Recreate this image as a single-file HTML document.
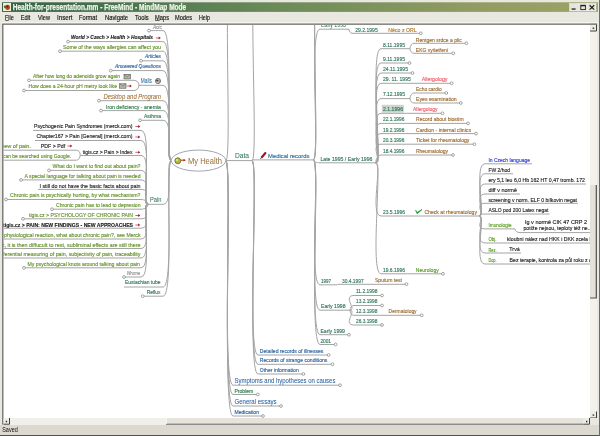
<!DOCTYPE html><html><head><meta charset="utf-8"><style>
html,body{margin:0;padding:0;width:600px;height:436px;overflow:hidden;background:#ece9d8;}
svg{display:block;will-change:transform;font-family:"Liberation Sans",sans-serif;}
</style></head><body>
<svg width="600" height="436" viewBox="0 0 600 436">
<defs><linearGradient id="tb" x1="0" x2="1" y1="0" y2="0"><stop offset="0" stop-color="#335f42"/><stop offset="0.2" stop-color="#4b7550"/><stop offset="0.45" stop-color="#6a8a58"/><stop offset="0.8" stop-color="#929c62"/><stop offset="1" stop-color="#9aa466"/></linearGradient><clipPath id="cv"><rect x="3.5" y="25" width="586.5" height="393"/></clipPath></defs>
<rect x="0" y="0" width="600" height="436" fill="#e9e8e0"/>
<rect x="2" y="2.3" width="596" height="9.6" fill="url(#tb)"/>
<rect x="3" y="3" width="8" height="8" fill="#f2ecd4"/><ellipse cx="7.6" cy="7.3" rx="2.4" ry="2.6" fill="#b04a20"/><circle cx="7.4" cy="6.6" r="1" fill="#701808"/><ellipse cx="5" cy="6.8" rx="1.1" ry="1.5" fill="#6a5a30"/>
<text x="12.7" y="9.8" font-size="8.4" font-weight="bold" fill="#eef6ea" stroke="#eef6ea" stroke-width="0.25" textLength="173.5" lengthAdjust="spacingAndGlyphs">Health-for-presentation.mm - FreeMind - MindMap Mode</text>
<rect x="569.7" y="3.5" width="8.5" height="7.5" fill="#e6e6dc" stroke="#fafafa" stroke-width="0.5"/>
<rect x="578.7" y="3.5" width="8.5" height="7.5" fill="#e6e6dc" stroke="#fafafa" stroke-width="0.5"/>
<rect x="587.5" y="3.5" width="8.5" height="7.5" fill="#e6e6dc" stroke="#fafafa" stroke-width="0.5"/>
<rect x="571.6" y="8.4" width="4" height="1.3" fill="#202020"/>
<rect x="580.8" y="5.3" width="4.6" height="4.3" fill="none" stroke="#202020" stroke-width="0.9"/><rect x="580.8" y="5" width="4.6" height="1.3" fill="#202020"/>
<path d="M589.6,5.2L594.2,9.6M594.2,5.2L589.6,9.6" stroke="#202020" stroke-width="1.2"/>
<text x="5" y="19.7" font-size="7.4" fill="#101010" stroke="#101010" stroke-width="0.15" textLength="8.8" lengthAdjust="spacingAndGlyphs">File</text>
<text x="20.7" y="19.7" font-size="7.4" fill="#101010" stroke="#101010" stroke-width="0.15" textLength="9.6" lengthAdjust="spacingAndGlyphs">Edit</text>
<text x="38" y="19.7" font-size="7.4" fill="#101010" stroke="#101010" stroke-width="0.15" textLength="12.0" lengthAdjust="spacingAndGlyphs">View</text>
<text x="57" y="19.7" font-size="7.4" fill="#101010" stroke="#101010" stroke-width="0.15" textLength="15.5" lengthAdjust="spacingAndGlyphs">Insert</text>
<text x="79" y="19.7" font-size="7.4" fill="#101010" stroke="#101010" stroke-width="0.15" textLength="18.0" lengthAdjust="spacingAndGlyphs">Format</text>
<text x="105" y="19.7" font-size="7.4" fill="#101010" stroke="#101010" stroke-width="0.15" textLength="23.0" lengthAdjust="spacingAndGlyphs">Navigate</text>
<text x="135" y="19.7" font-size="7.4" fill="#101010" stroke="#101010" stroke-width="0.15" textLength="13.6" lengthAdjust="spacingAndGlyphs">Tools</text>
<text x="155" y="19.7" font-size="7.4" fill="#101010" stroke="#101010" stroke-width="0.15" textLength="14.0" lengthAdjust="spacingAndGlyphs">Maps</text>
<text x="175" y="19.7" font-size="7.4" fill="#101010" stroke="#101010" stroke-width="0.15" textLength="17.0" lengthAdjust="spacingAndGlyphs">Modes</text>
<text x="199" y="19.7" font-size="7.4" fill="#101010" stroke="#101010" stroke-width="0.15" textLength="11.0" lengthAdjust="spacingAndGlyphs">Help</text>
<rect x="5.2" y="20.3" width="3.5" height="0.6" fill="#101010"/><rect x="155.2" y="20.3" width="4.5" height="0.6" fill="#101010"/>
<rect x="2" y="22" width="596" height="0.8" fill="#f8f8f4"/>
<rect x="2" y="23" width="588" height="395" fill="#ffffff"/>
<path d="M2.8,424.5V24.1H597" stroke="#646464" stroke-width="1.25" fill="none"/>
<g clip-path="url(#cv)">
<rect x="381.8" y="104.8" width="22" height="7.8" fill="#cbd4cd"/>
<path d="M149,30.6H163 M171.5,160.6C164.50,160.6 174.70,30.6 163,30.6 M68,41.6H163 M171.5,160.6C164.50,160.6 174.70,41.6 163,41.6 M60,51.2H163 M171.5,160.6C164.50,160.6 174.70,51.2 163,51.2 M141,60.8H163 M171.5,160.6C164.50,160.6 174.70,60.8 163,60.8 M110.7,70.6H163 M171.5,160.6C164.50,160.6 174.70,70.6 163,70.6 M139,85.3H163 M171.5,160.6C164.50,160.6 174.70,85.3 163,85.3 M99,100.7H163 M171.5,160.6C164.50,160.6 174.70,100.7 163,100.7 M101,110.6H163 M171.5,160.6C164.50,160.6 174.70,110.6 163,110.6 M140,120.3H163 M171.5,160.6C164.50,160.6 174.70,120.3 163,120.3 M148,204.3H163 M171.5,160.6C164.50,160.6 174.70,204.3 163,204.3 M124,287.0H163 M171.5,160.6C164.50,160.6 174.70,287.0 163,287.0 M142.7,296.2H163 M171.5,160.6C164.50,160.6 174.70,296.2 163,296.2 M29,80.3H134 M139,85C139,82.41 136.75,80.3 134,80.3 M24,90.5H134 M139,85C139,88.03 136.75,90.5 134,90.5 M33,130.4H141 M148,204.3C141.00,204.3 152.70,130.4 141,130.4 M35,140.5H141 M148,204.3C141.00,204.3 152.70,140.5 141,140.5 M80.2,155.5H141 M148,204.3C141.00,204.3 152.70,155.5 141,155.5 M49,170.4H141 M148,204.3C141.00,204.3 152.70,170.4 141,170.4 M21,179.9H141 M148,204.3C141.00,204.3 152.70,179.9 141,179.9 M38,189.4H141 M148,204.3C141.00,204.3 152.70,189.4 141,189.4 M6,199.5H141 M148,204.3C148,201.66 144.85,199.5 141,199.5 M52,209.2H141 M148,204.3C148,207.00 144.85,209.2 141,209.2 M23,218.8H141 M148,204.3C141.00,204.3 152.70,218.8 141,218.8 M3,228.2H141 M148,204.3C141.00,204.3 152.70,228.2 141,228.2 M3,239H141 M148,204.3C141.00,204.3 152.70,239 141,239 M3,248.5H141 M148,204.3C141.00,204.3 152.70,248.5 141,248.5 M3,258H141 M148,204.3C141.00,204.3 152.70,258 141,258 M24,267.8H141 M148,204.3C141.00,204.3 152.70,267.8 141,267.8 M124,277H141 M148,204.3C141.00,204.3 152.70,277 141,277 M3,150.2H76.5 M80.2,154.7C80.2,152.22 78.53,150.2 76.5,150.2 M3,160.2H76.5 M80.2,154.7C80.2,157.72 78.53,160.2 76.5,160.2 M225.7,160.6C232.70,160.6 221.30,-40 233,-40 M225.7,160.6H252 M225.7,160.6C232.70,160.6 221.30,385.2 233,385.2 M233,385.2H340 M225.7,160.6C232.70,160.6 221.30,394.5 233,394.5 M233,394.5H257.8 M225.7,160.6C232.70,160.6 221.30,406 233,406 M233,406H281 M225.7,160.6C232.70,160.6 221.30,416 233,416 M233,416H263 M252,160.6C259.00,160.6 246.30,-40 258,-40 M252,159.9H313.4 M252,160.6C259.00,160.6 246.30,355 258,355 M258,355H328.6 M252,160.6C259.00,160.6 246.30,364.3 258,364.3 M258,364.3H332.5 M252,160.6C259.00,160.6 246.30,374 258,374 M258,374H303.4 M313.4,159.9C320.40,159.9 308.30,-40 320,-40 M313.4,159.9C320.40,159.9 308.30,-20 320,-20 M313.4,159.9C320.40,159.9 308.30,29.2 320,29.2 M320,29.2H349 M349,29.2C349,31.45 350.35,33.3 352,33.3 M352,33.3H420.8 M313.4,159.9C313.4,161.50 316.37,162.8 320,162.8 M320,162.8H375.8 M313.4,159.9C320.40,159.9 308.30,284.8 320,284.8 M320,284.8H337 M337,284.8C337,284.53 338.35,284.3 340,284.3 M340,284.3H406.5 M313.4,159.9C320.40,159.9 308.30,310.2 320,310.2 M320,310.2H350 M350,310.2C357.00,310.2 342.30,295.5 354,295.5 M354,295.5H382 M350,310.2C350,307.62 351.80,305.5 354,305.5 M354,305.5H382 M350,310.2C350,313.00 351.80,315.3 354,315.3 M354,315.3H421.7 M350,310.2C357.00,310.2 342.30,325 354,325 M354,325H382 M313.4,159.9C320.40,159.9 308.30,334.7 320,334.7 M320,334.7H349 M313.4,159.9C320.40,159.9 308.30,344.5 320,344.5 M320,344.5H335.6 M375.8,162.8C382.80,162.8 369.30,48.7 381,48.7 M381,48.7H410 M410,48.7C410,45.73 411.80,43.3 414,43.3 M414,43.3H466.3 M410,48.7C410,51.23 411.80,53.3 414,53.3 M414,53.3H453.3 M375.8,162.8C382.80,162.8 369.30,63 381,63 M381,63H409.5 M375.8,162.8C382.80,162.8 369.30,73 381,73 M381,73H412.5 M375.8,162.8C382.80,162.8 369.30,83.3 381,83.3 M381,83.3H451.7 M375.8,162.8C382.80,162.8 369.30,98.6 381,98.6 M381,98.6H410 M410,98.6C410,95.52 411.80,93 414,93 M414,93H446.3 M410,98.6C410,101.02 411.80,103 414,103 M414,103H460.8 M375.8,162.8C382.80,162.8 369.30,113.3 381,113.3 M381,113.3H442.5 M375.8,162.8C382.80,162.8 369.30,123.4 381,123.4 M381,123.4H468 M375.8,162.8C382.80,162.8 369.30,133.6 381,133.6 M381,133.6H476 M375.8,162.8C382.80,162.8 369.30,144.2 381,144.2 M381,144.2H474.4 M375.8,162.8C375.8,158.51 378.14,155.0 381,155.0 M381,155.0H453 M375.8,162.8C382.80,162.8 369.30,216.0 381,216.0 M381,216.0H479 M375.8,162.8C382.80,162.8 369.30,273.8 381,273.8 M381,273.8H443 M479,216.0C486.00,216.0 473.30,163.8 485,163.8 M485,163.8H532 M479,216.0C486.00,216.0 473.30,173.8 485,173.8 M485,173.8H513 M479,216.0C486.00,216.0 473.30,184.0 485,184.0 M485,184.0H586 M479,216.0C486.00,216.0 473.30,194.0 485,194.0 M485,194.0H520 M479,216.0C486.00,216.0 473.30,203.3 485,203.3 M485,203.3H578 M479,216.0C479,214.90 481.70,214.0 485,214.0 M485,214.0H549.5 M479,216.0C486.00,216.0 473.30,228.9 485,228.9 M485,228.9H515 M515,228.9C515,230.94 517.25,232.6 520,232.6 M520,232.6H592 M479,216.0C486.00,216.0 473.30,243.0 485,243.0 M485,243.0H592 M479,216.0C486.00,216.0 473.30,253.0 485,253.0 M485,253.0H521 M479,216.0C486.00,216.0 473.30,264.0 485,264.0 M485,264.0H592" stroke="#a4a4a4" stroke-width="1" fill="none"/>
<ellipse cx="198.5" cy="160.6" rx="27.2" ry="10.5" fill="#ffffff" stroke="#9a9aa8" stroke-width="0.9"/>
<circle cx="149" cy="30.6" r="1.4" fill="#ffffff" stroke="#808080" stroke-width="0.7"/>
<circle cx="68" cy="41.6" r="1.4" fill="#ffffff" stroke="#808080" stroke-width="0.7"/>
<circle cx="60" cy="51.2" r="1.4" fill="#ffffff" stroke="#808080" stroke-width="0.7"/>
<circle cx="141" cy="60.8" r="1.4" fill="#ffffff" stroke="#808080" stroke-width="0.7"/>
<circle cx="110.7" cy="70.6" r="1.4" fill="#ffffff" stroke="#808080" stroke-width="0.7"/>
<circle cx="99" cy="100.7" r="1.4" fill="#ffffff" stroke="#808080" stroke-width="0.7"/>
<circle cx="101" cy="110.6" r="1.4" fill="#ffffff" stroke="#808080" stroke-width="0.7"/>
<circle cx="140" cy="120.3" r="1.4" fill="#ffffff" stroke="#808080" stroke-width="0.7"/>
<circle cx="142.7" cy="296.2" r="1.4" fill="#ffffff" stroke="#808080" stroke-width="0.7"/>
<circle cx="29" cy="80.3" r="1.4" fill="#ffffff" stroke="#808080" stroke-width="0.7"/>
<circle cx="24" cy="90.5" r="1.4" fill="#ffffff" stroke="#808080" stroke-width="0.7"/>
<circle cx="49" cy="170.4" r="1.4" fill="#ffffff" stroke="#808080" stroke-width="0.7"/>
<circle cx="21" cy="179.9" r="1.4" fill="#ffffff" stroke="#808080" stroke-width="0.7"/>
<circle cx="6" cy="199.5" r="1.4" fill="#ffffff" stroke="#808080" stroke-width="0.7"/>
<circle cx="52" cy="209.2" r="1.4" fill="#ffffff" stroke="#808080" stroke-width="0.7"/>
<circle cx="23" cy="218.8" r="1.4" fill="#ffffff" stroke="#808080" stroke-width="0.7"/>
<circle cx="24" cy="267.8" r="1.4" fill="#ffffff" stroke="#808080" stroke-width="0.7"/>
<circle cx="124" cy="277" r="1.4" fill="#ffffff" stroke="#808080" stroke-width="0.7"/>
<circle cx="340" cy="385.2" r="1.4" fill="#ffffff" stroke="#808080" stroke-width="0.7"/>
<circle cx="257.8" cy="394.5" r="1.4" fill="#ffffff" stroke="#808080" stroke-width="0.7"/>
<circle cx="281" cy="406" r="1.4" fill="#ffffff" stroke="#808080" stroke-width="0.7"/>
<circle cx="263" cy="416" r="1.4" fill="#ffffff" stroke="#808080" stroke-width="0.7"/>
<circle cx="328.6" cy="355" r="1.4" fill="#ffffff" stroke="#808080" stroke-width="0.7"/>
<circle cx="332.5" cy="364.3" r="1.4" fill="#ffffff" stroke="#808080" stroke-width="0.7"/>
<circle cx="303.4" cy="374" r="1.4" fill="#ffffff" stroke="#808080" stroke-width="0.7"/>
<circle cx="420.8" cy="33.3" r="1.4" fill="#ffffff" stroke="#808080" stroke-width="0.7"/>
<circle cx="406.5" cy="284.2" r="1.4" fill="#ffffff" stroke="#808080" stroke-width="0.7"/>
<circle cx="382" cy="295.5" r="1.4" fill="#ffffff" stroke="#808080" stroke-width="0.7"/>
<circle cx="382" cy="305.5" r="1.4" fill="#ffffff" stroke="#808080" stroke-width="0.7"/>
<circle cx="421.7" cy="315.3" r="1.4" fill="#ffffff" stroke="#808080" stroke-width="0.7"/>
<circle cx="382" cy="325" r="1.4" fill="#ffffff" stroke="#808080" stroke-width="0.7"/>
<circle cx="349" cy="334.7" r="1.4" fill="#ffffff" stroke="#808080" stroke-width="0.7"/>
<circle cx="335.6" cy="344.5" r="1.4" fill="#ffffff" stroke="#808080" stroke-width="0.7"/>
<circle cx="466.3" cy="43.3" r="1.4" fill="#ffffff" stroke="#808080" stroke-width="0.7"/>
<circle cx="453.3" cy="53.3" r="1.4" fill="#ffffff" stroke="#808080" stroke-width="0.7"/>
<circle cx="409.5" cy="63" r="1.4" fill="#ffffff" stroke="#808080" stroke-width="0.7"/>
<circle cx="412.5" cy="73" r="1.4" fill="#ffffff" stroke="#808080" stroke-width="0.7"/>
<circle cx="451.7" cy="83.3" r="1.4" fill="#ffffff" stroke="#808080" stroke-width="0.7"/>
<circle cx="446.3" cy="93" r="1.4" fill="#ffffff" stroke="#808080" stroke-width="0.7"/>
<circle cx="460.8" cy="103" r="1.4" fill="#ffffff" stroke="#808080" stroke-width="0.7"/>
<circle cx="442.5" cy="113.3" r="1.4" fill="#ffffff" stroke="#808080" stroke-width="0.7"/>
<circle cx="468" cy="123.4" r="1.4" fill="#ffffff" stroke="#808080" stroke-width="0.7"/>
<circle cx="476" cy="133.6" r="1.4" fill="#ffffff" stroke="#808080" stroke-width="0.7"/>
<circle cx="474.4" cy="144.2" r="1.4" fill="#ffffff" stroke="#808080" stroke-width="0.7"/>
<circle cx="453" cy="155.0" r="1.4" fill="#ffffff" stroke="#808080" stroke-width="0.7"/>
<circle cx="443" cy="273.8" r="1.4" fill="#ffffff" stroke="#808080" stroke-width="0.7"/>
<path d="M155.9,38H159.3" stroke="#c83848" stroke-width="0.8"/><path d="M158.7,36.6L160.8,38L158.7,39.4Z" fill="#9a1a2a"/>
<path d="M126.9,86H130.3" stroke="#c83848" stroke-width="0.8"/><path d="M129.7,84.6L131.8,86L129.7,87.4Z" fill="#9a1a2a"/>
<path d="M135.4,126.5H138.8" stroke="#c83848" stroke-width="0.8"/><path d="M138.2,125.1L140.3,126.5L138.2,127.9Z" fill="#9a1a2a"/>
<path d="M135.4,137H138.8" stroke="#c83848" stroke-width="0.8"/><path d="M138.2,135.6L140.3,137L138.2,138.4Z" fill="#9a1a2a"/>
<path d="M135.4,152.3H138.8" stroke="#c83848" stroke-width="0.8"/><path d="M138.2,150.9L140.3,152.3L138.2,153.70000000000002Z" fill="#9a1a2a"/>
<path d="M135.4,215.5H138.8" stroke="#c83848" stroke-width="0.8"/><path d="M138.2,214.1L140.3,215.5L138.2,216.9Z" fill="#9a1a2a"/>
<path d="M135.4,225H138.8" stroke="#c83848" stroke-width="0.8"/><path d="M138.2,223.6L140.3,225L138.2,226.4Z" fill="#9a1a2a"/>
<path d="M67.4,146H70.8" stroke="#c83848" stroke-width="0.8"/><path d="M70.2,144.6L72.3,146L70.2,147.4Z" fill="#9a1a2a"/>
<circle cx="177.8" cy="160.8" r="3" fill="#b4b83a" stroke="#5a5a20" stroke-width="0.7"/><circle cx="177" cy="159.9" r="1" fill="#eeeea0"/>
<path d="M181,160.2H184.5" stroke="#b02818" stroke-width="1"/><path d="M183.5,158.8L185.8,160.2L183.5,161.6Z" fill="#b02818"/>
<text x="188" y="163.6" font-size="8.2" fill="#967038" textLength="34" lengthAdjust="spacingAndGlyphs">My Health</text>
<text x="153" y="29.0" font-size="5.2" fill="#8a8a8a" stroke="#8a8a8a" stroke-width="0.15" font-style="italic" textLength="8.7" lengthAdjust="spacingAndGlyphs">Acic</text>
<text x="71" y="38.8" font-size="6.2" fill="#1c1c1c" stroke="#1c1c1c" stroke-width="0.15" font-weight="bold" font-style="italic" textLength="82.0" lengthAdjust="spacingAndGlyphs">World &gt; Czech &gt; Health &gt; Hospitals</text>
<text x="63" y="48.6" font-size="6.2" fill="#63922a" stroke="#63922a" stroke-width="0.15" textLength="98.0" lengthAdjust="spacingAndGlyphs">Some of the ways allergies can affect you</text>
<text x="145" y="58.3" font-size="6.2" fill="#2a62a0" stroke="#2a62a0" stroke-width="0.15" font-style="italic" textLength="16.0" lengthAdjust="spacingAndGlyphs">Articles</text>
<text x="115" y="67.6" font-size="6.2" fill="#2a62a0" stroke="#2a62a0" stroke-width="0.15" font-style="italic" textLength="46.0" lengthAdjust="spacingAndGlyphs">Answered Questions</text>
<text x="140.8" y="83.2" font-size="6.8" fill="#2a6a9a" stroke="#2a6a9a" stroke-width="0.05" textLength="11.2" lengthAdjust="spacingAndGlyphs">Mails</text>
<text x="103.5" y="98.8" font-size="7.4" fill="#9a6a30" stroke="#9a6a30" stroke-width="0.05" font-style="italic" textLength="57.5" lengthAdjust="spacingAndGlyphs">Desktop and Program</text>
<text x="106" y="108.6" font-size="6.2" fill="#2c7a48" stroke="#2c7a48" stroke-width="0.15" textLength="55.0" lengthAdjust="spacingAndGlyphs">Iron deficiency - anemia</text>
<text x="144" y="118" font-size="6.2" fill="#2c7a48" stroke="#2c7a48" stroke-width="0.15" textLength="17.0" lengthAdjust="spacingAndGlyphs">Asthma</text>
<text x="150" y="202.4" font-size="6.6" fill="#2f7558" stroke="#2f7558" stroke-width="0.05" textLength="11.5" lengthAdjust="spacingAndGlyphs">Pain</text>
<text x="125" y="284.3" font-size="6.2" fill="#2f7558" stroke="#2f7558" stroke-width="0.15" textLength="35.5" lengthAdjust="spacingAndGlyphs">Eustachian tube</text>
<text x="146.7" y="293.8" font-size="6.2" fill="#2f7558" stroke="#2f7558" stroke-width="0.15" textLength="13.8" lengthAdjust="spacingAndGlyphs">Reflux</text>
<text x="33" y="78.3" font-size="6.2" fill="#63922a" stroke="#63922a" stroke-width="0.15" textLength="87.0" lengthAdjust="spacingAndGlyphs">After how long do adenoids grow again</text>
<text x="28.5" y="88.4" font-size="6.2" fill="#63922a" stroke="#63922a" stroke-width="0.15" textLength="88.5" lengthAdjust="spacingAndGlyphs">How does a 24-hour pH metry look like</text>
<text x="34" y="127.9" font-size="6.2" fill="#1c1c1c" stroke="#1c1c1c" stroke-width="0.15" textLength="98.5" lengthAdjust="spacingAndGlyphs">Psychogenic Pain Syndromes (merck.com)</text>
<text x="36.5" y="137.8" font-size="6.2" fill="#1c1c1c" stroke="#1c1c1c" stroke-width="0.15" textLength="96.0" lengthAdjust="spacingAndGlyphs">Chapter167  &gt; Pain [General] (merck.com)</text>
<text x="82.7" y="153.8" font-size="6.2" fill="#1c1c1c" stroke="#1c1c1c" stroke-width="0.15" textLength="49.8" lengthAdjust="spacingAndGlyphs">tigis.cz &gt; Pain &gt; Index</text>
<text x="52.5" y="168" font-size="6.2" fill="#63922a" stroke="#63922a" stroke-width="0.15" textLength="88.0" lengthAdjust="spacingAndGlyphs">What do I want to find out about pain?</text>
<text x="24.5" y="177.6" font-size="6.2" fill="#63922a" stroke="#63922a" stroke-width="0.15" textLength="116.0" lengthAdjust="spacingAndGlyphs">A special language for talking about pain is needed</text>
<text x="39.5" y="187.6" font-size="6.2" fill="#1c1c1c" stroke="#1c1c1c" stroke-width="0.15" textLength="101.0" lengthAdjust="spacingAndGlyphs">I still do not have the basic facts about pain</text>
<text x="10" y="197.3" font-size="6.2" fill="#63922a" stroke="#63922a" stroke-width="0.15" textLength="130.5" lengthAdjust="spacingAndGlyphs">Chronic pain is psychically hurting, by what mechanism?</text>
<text x="56" y="207.3" font-size="6.2" fill="#63922a" stroke="#63922a" stroke-width="0.15" textLength="84.5" lengthAdjust="spacingAndGlyphs">Chronic pain has to lead to depresion</text>
<text x="29" y="217.2" font-size="6.2" fill="#63922a" stroke="#63922a" stroke-width="0.15" textLength="104.0" lengthAdjust="spacingAndGlyphs">tigis.cz &gt; PSYCHOLOGY OF CHRONIC PAIN</text>
<text x="3" y="226.7" font-size="6.0" fill="#1c1c1c" stroke="#1c1c1c" stroke-width="0.15" font-weight="bold" textLength="130.0" lengthAdjust="spacingAndGlyphs">tigis.cz &gt; PAIN: NEW FINDINGS - NEW APPROACHES</text>
<text x="4" y="237.2" font-size="6.2" fill="#63922a" stroke="#63922a" stroke-width="0.15" textLength="136.5" lengthAdjust="spacingAndGlyphs">physiological reaction, what about chronic pain?, see Merck</text>
<text x="3" y="246.7" font-size="6.2" fill="#63922a" stroke="#63922a" stroke-width="0.15" textLength="137.5" lengthAdjust="spacingAndGlyphs">t, it is then diffucult to rest, subliminal effects are still there</text>
<text x="3" y="256.2" font-size="6.2" fill="#63922a" stroke="#63922a" stroke-width="0.15" textLength="137.5" lengthAdjust="spacingAndGlyphs">ferential measuring of pain, subjectivity of pain, traceability</text>
<text x="27.5" y="266" font-size="6.2" fill="#63922a" stroke="#63922a" stroke-width="0.15" textLength="112.5" lengthAdjust="spacingAndGlyphs">My psychological knots around talking about pain</text>
<text x="126.7" y="275.3" font-size="5.0" fill="#909090" stroke="#909090" stroke-width="0.15" font-style="italic" textLength="13.3" lengthAdjust="spacingAndGlyphs">Wrome</text>
<text x="40.8" y="147.5" font-size="6.2" fill="#1c1c1c" stroke="#1c1c1c" stroke-width="0.15" textLength="24.4" lengthAdjust="spacingAndGlyphs">PDF &gt; Pdf</text>
<text x="3" y="147.5" font-size="6.2" fill="#63922a" stroke="#63922a" stroke-width="0.15" textLength="28.0" lengthAdjust="spacingAndGlyphs">iew of pain.</text>
<text x="3" y="158.0" font-size="6.2" fill="#63922a" stroke="#63922a" stroke-width="0.15" textLength="68.0" lengthAdjust="spacingAndGlyphs">can be searched using Google.</text>
<text x="235" y="157.8" font-size="7.4" fill="#2f7558" stroke="#2f7558" stroke-width="0.05" textLength="14.0" lengthAdjust="spacingAndGlyphs">Data</text>
<text x="234.5" y="383.2" font-size="7.0" fill="#2a62a0" stroke="#2a62a0" stroke-width="0.05" textLength="100.9" lengthAdjust="spacingAndGlyphs">Symptoms and hypotheses on causes</text>
<text x="234.5" y="392.8" font-size="5.4" fill="#2c7a48" stroke="#2c7a48" stroke-width="0.15" textLength="18.8" lengthAdjust="spacingAndGlyphs">Problem</text>
<text x="234.5" y="404.0" font-size="7.0" fill="#2a62a0" stroke="#2a62a0" stroke-width="0.05" textLength="42.1" lengthAdjust="spacingAndGlyphs">General essays</text>
<text x="234.5" y="414.3" font-size="5.4" fill="#2a62a0" stroke="#2a62a0" stroke-width="0.15" textLength="24.5" lengthAdjust="spacingAndGlyphs">Medication</text>
<text x="268" y="158.0" font-size="6.2" fill="#2a72a0" stroke="#2a72a0" stroke-width="0.15" textLength="41.5" lengthAdjust="spacingAndGlyphs">Medical records</text>
<text x="259.8" y="353.0" font-size="6.2" fill="#2a62a0" stroke="#2a62a0" stroke-width="0.15" textLength="63.6" lengthAdjust="spacingAndGlyphs">Detailed records of illnesses</text>
<text x="259.8" y="362.3" font-size="6.2" fill="#2a62a0" stroke="#2a62a0" stroke-width="0.15" textLength="67.6" lengthAdjust="spacingAndGlyphs">Records of strange conditions</text>
<text x="259.8" y="372.0" font-size="6.2" fill="#2a62a0" stroke="#2a62a0" stroke-width="0.15" textLength="38.9" lengthAdjust="spacingAndGlyphs">Other information</text>
<text x="321" y="27.3" font-size="7.0" fill="#2f7558" stroke="#2f7558" stroke-width="0.05" textLength="25.0" lengthAdjust="spacingAndGlyphs">Early 1995</text>
<text x="355.3" y="31.7" font-size="6.2" fill="#2f7558" stroke="#2f7558" stroke-width="0.15" textLength="22.4" lengthAdjust="spacingAndGlyphs">29.2.1995</text>
<text x="388.3" y="31.5" font-size="6.2" fill="#b0782a" stroke="#b0782a" stroke-width="0.15" textLength="28.4" lengthAdjust="spacingAndGlyphs">Něco z ORL</text>
<text x="320.4" y="160.5" font-size="6.2" fill="#2f7558" stroke="#2f7558" stroke-width="0.15" textLength="52.0" lengthAdjust="spacingAndGlyphs">Late 1995 / Early 1996</text>
<text x="321" y="283.2" font-size="6.2" fill="#2f7558" stroke="#2f7558" stroke-width="0.15" textLength="10.0" lengthAdjust="spacingAndGlyphs">1997</text>
<text x="342" y="283.0" font-size="6.2" fill="#2f7558" stroke="#2f7558" stroke-width="0.15" textLength="21.6" lengthAdjust="spacingAndGlyphs">30.4.1997</text>
<text x="375" y="282.4" font-size="6.2" fill="#9a6a30" stroke="#9a6a30" stroke-width="0.15" textLength="26.9" lengthAdjust="spacingAndGlyphs">Sputum test</text>
<text x="321" y="308.4" font-size="6.2" fill="#2f7558" stroke="#2f7558" stroke-width="0.15" textLength="24.5" lengthAdjust="spacingAndGlyphs">Early 1998</text>
<text x="356" y="293.0" font-size="6.2" fill="#2f7558" stroke="#2f7558" stroke-width="0.15" textLength="21.4" lengthAdjust="spacingAndGlyphs">11.2.1998</text>
<text x="356" y="303.2" font-size="6.2" fill="#2f7558" stroke="#2f7558" stroke-width="0.15" textLength="21.4" lengthAdjust="spacingAndGlyphs">13.2.1998</text>
<text x="356" y="312.8" font-size="6.2" fill="#2f7558" stroke="#2f7558" stroke-width="0.15" textLength="21.4" lengthAdjust="spacingAndGlyphs">12.3.1998</text>
<text x="356" y="323.2" font-size="6.2" fill="#2f7558" stroke="#2f7558" stroke-width="0.15" textLength="21.4" lengthAdjust="spacingAndGlyphs">26.3.1998</text>
<text x="388.6" y="312.8" font-size="6.2" fill="#9a6a30" stroke="#9a6a30" stroke-width="0.15" textLength="28.0" lengthAdjust="spacingAndGlyphs">Dermatology</text>
<text x="320.4" y="333.0" font-size="6.2" fill="#2f7558" stroke="#2f7558" stroke-width="0.15" textLength="24.6" lengthAdjust="spacingAndGlyphs">Early 1999</text>
<text x="320.4" y="342.8" font-size="6.2" fill="#2f7558" stroke="#2f7558" stroke-width="0.15" textLength="10.6" lengthAdjust="spacingAndGlyphs">2001</text>
<text x="383" y="46.8" font-size="6.2" fill="#2f7558" stroke="#2f7558" stroke-width="0.15" textLength="22.0" lengthAdjust="spacingAndGlyphs">8.11.1995</text>
<text x="415.8" y="41.6" font-size="6.2" fill="#9a6a30" stroke="#9a6a30" stroke-width="0.15" textLength="45.9" lengthAdjust="spacingAndGlyphs">Rentgen srdce a plic</text>
<text x="415.8" y="51.6" font-size="6.2" fill="#9a6a30" stroke="#9a6a30" stroke-width="0.15" textLength="32.5" lengthAdjust="spacingAndGlyphs">EKG vyšetření</text>
<text x="383" y="61.2" font-size="6.2" fill="#2f7558" stroke="#2f7558" stroke-width="0.15" textLength="22.0" lengthAdjust="spacingAndGlyphs">9.11.1995</text>
<text x="383" y="71.2" font-size="6.2" fill="#2f7558" stroke="#2f7558" stroke-width="0.15" textLength="25.0" lengthAdjust="spacingAndGlyphs">24.11.1995</text>
<text x="383" y="81.2" font-size="6.2" fill="#2f7558" stroke="#2f7558" stroke-width="0.15" textLength="27.8" lengthAdjust="spacingAndGlyphs">29. 11. 1995</text>
<text x="421.7" y="81.0" font-size="6.2" fill="#ec5a6a" stroke="#ec5a6a" stroke-width="0.15" textLength="25.8" lengthAdjust="spacingAndGlyphs">Allergology</text>
<text x="383" y="96.2" font-size="6.2" fill="#2f7558" stroke="#2f7558" stroke-width="0.15" textLength="22.0" lengthAdjust="spacingAndGlyphs">7.12.1995</text>
<text x="416" y="91.2" font-size="6.2" fill="#9a6a30" stroke="#9a6a30" stroke-width="0.15" textLength="25.7" lengthAdjust="spacingAndGlyphs">Echo cardio</text>
<text x="416" y="101.2" font-size="6.2" fill="#9a6a30" stroke="#9a6a30" stroke-width="0.15" textLength="40.7" lengthAdjust="spacingAndGlyphs">Eyes examination</text>
<text x="383" y="111.2" font-size="6.2" fill="#2f7558" stroke="#2f7558" stroke-width="0.15" textLength="20.0" lengthAdjust="spacingAndGlyphs">2.1.1996</text>
<text x="413" y="111.0" font-size="6.2" fill="#ec5a6a" stroke="#ec5a6a" stroke-width="0.15" textLength="24.5" lengthAdjust="spacingAndGlyphs">Allergology</text>
<text x="383" y="121.3" font-size="6.2" fill="#2f7558" stroke="#2f7558" stroke-width="0.15" textLength="21.4" lengthAdjust="spacingAndGlyphs">22.1.1996</text>
<text x="416" y="121.3" font-size="6.2" fill="#9a6a30" stroke="#9a6a30" stroke-width="0.15" textLength="47.6" lengthAdjust="spacingAndGlyphs">Record about biostim</text>
<text x="383" y="131.7" font-size="6.2" fill="#2f7558" stroke="#2f7558" stroke-width="0.15" textLength="21.4" lengthAdjust="spacingAndGlyphs">19.2.1996</text>
<text x="416" y="131.7" font-size="6.2" fill="#9a6a30" stroke="#9a6a30" stroke-width="0.15" textLength="55.0" lengthAdjust="spacingAndGlyphs">Cardion  - internal clinics</text>
<text x="383" y="142.2" font-size="6.2" fill="#2f7558" stroke="#2f7558" stroke-width="0.15" textLength="21.4" lengthAdjust="spacingAndGlyphs">20.3.1996</text>
<text x="416" y="142.2" font-size="6.2" fill="#9a6a30" stroke="#9a6a30" stroke-width="0.15" textLength="53.4" lengthAdjust="spacingAndGlyphs">Ticket for rheumatology</text>
<text x="383" y="152.5" font-size="6.2" fill="#2f7558" stroke="#2f7558" stroke-width="0.15" textLength="21.4" lengthAdjust="spacingAndGlyphs">18.4.1996</text>
<text x="416" y="152.5" font-size="6.2" fill="#9a6a30" stroke="#9a6a30" stroke-width="0.15" textLength="32.0" lengthAdjust="spacingAndGlyphs">Rheumatology</text>
<text x="383" y="214.0" font-size="6.2" fill="#2f7558" stroke="#2f7558" stroke-width="0.15" textLength="22.0" lengthAdjust="spacingAndGlyphs">23.5.1996</text>
<text x="424.4" y="214.0" font-size="6.2" fill="#9a6a30" stroke="#9a6a30" stroke-width="0.15" textLength="52.6" lengthAdjust="spacingAndGlyphs">Check at rheumatology</text>
<text x="383" y="272.3" font-size="6.2" fill="#2f7558" stroke="#2f7558" stroke-width="0.15" textLength="22.0" lengthAdjust="spacingAndGlyphs">19.6.1996</text>
<text x="415.8" y="272.0" font-size="6.2" fill="#5a9a20" stroke="#5a9a20" stroke-width="0.15" textLength="22.9" lengthAdjust="spacingAndGlyphs">Neurology</text>
<text x="488.4" y="162.2" font-size="6.2" fill="#2838d0" stroke="#2838d0" stroke-width="0.15" textLength="41.6" lengthAdjust="spacingAndGlyphs">In Czech language</text>
<text x="488.4" y="171.9" font-size="6.2" fill="#1c1c1c" stroke="#1c1c1c" stroke-width="0.15" textLength="21.6" lengthAdjust="spacingAndGlyphs">FW 2/hod</text>
<text x="488.4" y="182.3" font-size="6.2" fill="#1c1c1c" stroke="#1c1c1c" stroke-width="0.15" textLength="96.6" lengthAdjust="spacingAndGlyphs">ery 5,1 leu 6,0 Hb 162 HT 0,47 tromb. 172</text>
<text x="488.4" y="192.0" font-size="6.2" fill="#1c1c1c" stroke="#1c1c1c" stroke-width="0.15" textLength="28.6" lengthAdjust="spacingAndGlyphs">diff v normě</text>
<text x="488.4" y="201.5" font-size="6.2" fill="#1c1c1c" stroke="#1c1c1c" stroke-width="0.15" textLength="88.6" lengthAdjust="spacingAndGlyphs">screening v norm. ELF 0 bílkovin negat</text>
<text x="488.4" y="212.0" font-size="6.2" fill="#1c1c1c" stroke="#1c1c1c" stroke-width="0.15" textLength="60.0" lengthAdjust="spacingAndGlyphs">ASLO pod 200 Latex negat</text>
<text x="488.4" y="227.0" font-size="6.2" fill="#5a9a20" stroke="#5a9a20" stroke-width="0.15" textLength="23.2" lengthAdjust="spacingAndGlyphs">Imunologie</text>
<text x="525" y="223.6" font-size="6.0" fill="#1c1c1c" stroke="#1c1c1c" stroke-width="0.15" textLength="62.0" lengthAdjust="spacingAndGlyphs">Ig v normě   CIK 47   CRP 2</text>
<text x="523.5" y="230.2" font-size="6.2" fill="#1c1c1c" stroke="#1c1c1c" stroke-width="0.15" textLength="68.5" lengthAdjust="spacingAndGlyphs">potíže nejsou, teploty též ne...</text>
<text x="488.4" y="241.2" font-size="6.2" fill="#5a9a20" stroke="#5a9a20" stroke-width="0.15" textLength="8.2" lengthAdjust="spacingAndGlyphs">Obj.</text>
<text x="507" y="241.0" font-size="6.2" fill="#1c1c1c" stroke="#1c1c1c" stroke-width="0.15" textLength="85.0" lengthAdjust="spacingAndGlyphs">kloubní nález nad HKK i DKK zcela k</text>
<text x="488.4" y="251.8" font-size="6.2" fill="#5a9a20" stroke="#5a9a20" stroke-width="0.15" textLength="8.2" lengthAdjust="spacingAndGlyphs">Rez.</text>
<text x="509.3" y="251.0" font-size="6.2" fill="#1c1c1c" stroke="#1c1c1c" stroke-width="0.15" textLength="10.5" lengthAdjust="spacingAndGlyphs">Trvá</text>
<text x="488.4" y="262.2" font-size="6.2" fill="#5a9a20" stroke="#5a9a20" stroke-width="0.15" textLength="8.2" lengthAdjust="spacingAndGlyphs">Dop.</text>
<text x="509.6" y="262.0" font-size="6.2" fill="#1c1c1c" stroke="#1c1c1c" stroke-width="0.15" textLength="82.4" lengthAdjust="spacingAndGlyphs">Bez terapie, kontrola za půl roku z o</text>
<path d="M261.8,157.2L265.4,153" stroke="#9a1424" stroke-width="2.1" stroke-linecap="round"/><path d="M260.4,158.8L261.6,157.4" stroke="#505050" stroke-width="1"/>
<path d="M415.6,210.4L417.3,213.8L421.9,209.6L417.5,212.2Z" fill="#28a040" stroke="#28a040" stroke-width="0.9" stroke-linejoin="round"/>
<rect x="124" y="74.5" width="6.4" height="4.4" fill="#b8b8a8" stroke="#505050" stroke-width="0.6"/><path d="M124,74.5L127.2,76.9L130.4,74.5" stroke="#505050" stroke-width="0.5" fill="none"/>
<rect x="119.6" y="83.8" width="6.4" height="4.4" fill="#b8b8a8" stroke="#505050" stroke-width="0.6"/><path d="M119.6,83.8L122.8,86.2L126.0,83.8" stroke="#505050" stroke-width="0.5" fill="none"/>
<circle cx="158" cy="81" r="2.6" fill="#d8d4d0" stroke="#606060" stroke-width="0.8"/><circle cx="157.2" cy="80.6" r="1.1" fill="#404040"/><path d="M159,79.5V82.5" stroke="#505050" stroke-width="0.7"/>
</g>
<rect x="590" y="25" width="7" height="393" fill="#f2f1ec"/>
<rect x="590" y="25" width="6.5" height="6" fill="#ecebe4"/><path d="M590,31H596.5V24.5" stroke="#404040" stroke-width="1" fill="none"/><rect x="592.6" y="27.6" width="1.6" height="1.2" fill="#202020"/>
<rect x="590" y="185" width="6.5" height="113" fill="#e4e2d8"/><path d="M596.3,185V298H590" stroke="#505050" stroke-width="1.2" fill="none"/>
<rect x="590" y="411.5" width="6.5" height="6.5" fill="#ecebe4"/><path d="M590,418H596.5V411.5" stroke="#404040" stroke-width="1" fill="none"/><rect x="592.6" y="414.5" width="1.6" height="1.2" fill="#202020"/>
<rect x="3.5" y="418" width="586.5" height="7" fill="#f0efea"/>
<path d="M3.5,424.2H9.5V418" stroke="#404040" stroke-width="1" fill="none"/><rect x="5.8" y="420.8" width="1.3" height="1.5" fill="#202020"/>
<rect x="166" y="418" width="417.5" height="6.3" fill="#e6e4da"/><path d="M166,424.2H583.5" stroke="#606060" stroke-width="1"/><path d="M166.5,418V424" stroke="#fafafa" stroke-width="0.8"/>
<rect x="583.5" y="418" width="6" height="6.2" fill="#ecebe4"/><path d="M583.5,424.2H589.5V418" stroke="#404040" stroke-width="1" fill="none"/><rect x="586" y="420.8" width="1.3" height="1.5" fill="#202020"/>
<rect x="590" y="418" width="7" height="7" fill="#e9e8e0"/>
<rect x="0" y="425" width="600" height="10.5" fill="#dcdad0"/>
<text x="2.2" y="432.2" font-size="6.8" fill="#101010" textLength="15.6" lengthAdjust="spacingAndGlyphs">Saved</text>
<rect x="0" y="435" width="600" height="1" fill="#505050"/>
<rect x="599" y="0" width="1" height="436" fill="#6a6a6a"/>
</svg></body></html>
